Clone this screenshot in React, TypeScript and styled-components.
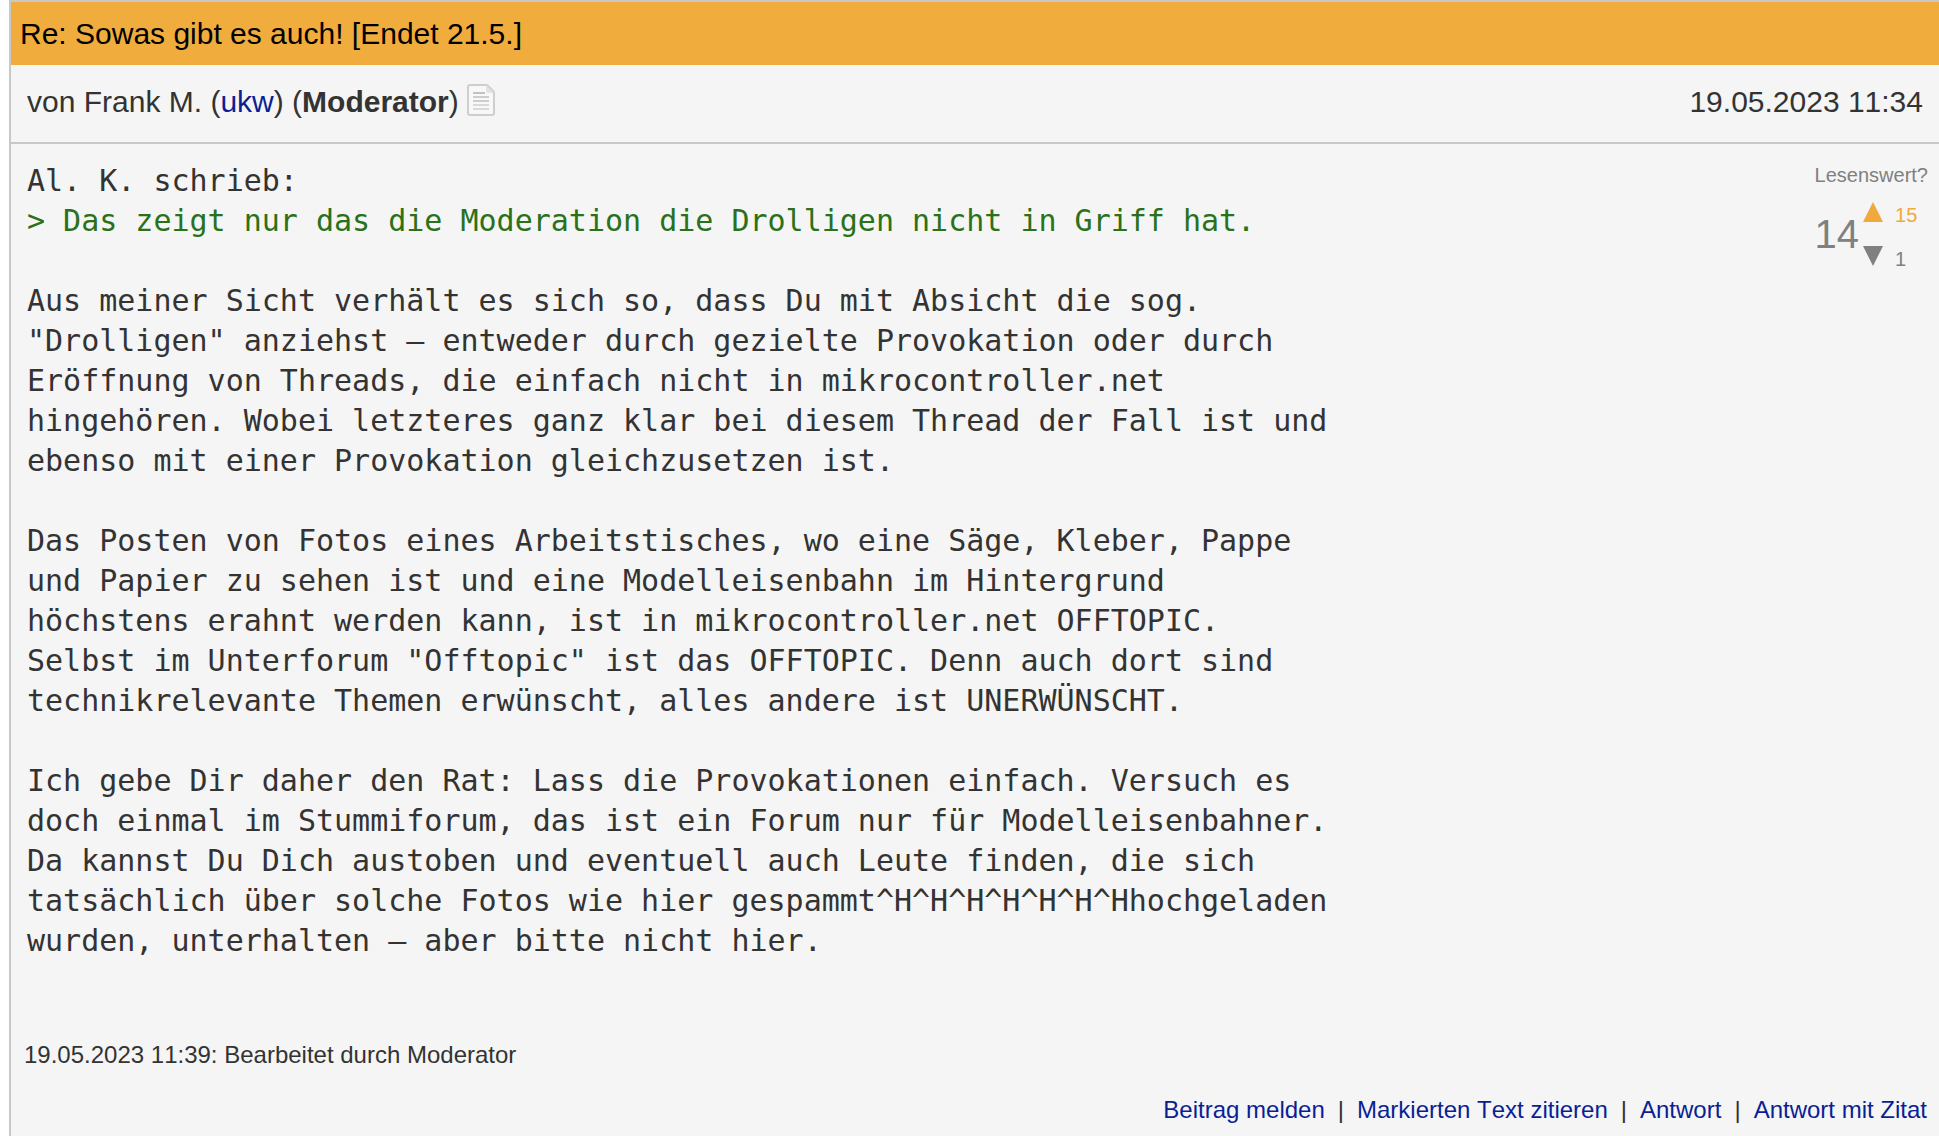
import React from "react";
import styled, { createGlobalStyle } from "styled-components";

const GlobalStyle = createGlobalStyle`
  body {
    margin: 0;
    background: #ffffff;
    font-family: "Liberation Sans", Arial, Helvetica, sans-serif;
    font-kerning: none;
    color: #333333;
  }
`;

const Post = styled.article`
  margin-left: 9px;
  border-top: 2px solid #c8c8c8;
  border-left: 2px solid #c8c8c8;
  background: #f5f5f5;
`;

const Title = styled.h1`
  margin: 0;
  padding: 12px 9px 11px;
  background: #f0ad3e;
  color: #000000;
  font-size: 30px;
  font-weight: 400;
  line-height: 40px;
`;

const Meta = styled.header`
  display: flex;
  justify-content: space-between;
  padding: 17px 16px 20px;
  border-bottom: 2px solid #c8c8c8;
  font-size: 30px;
  line-height: 40px;
`;

const Author = styled.div`
  display: flex;
  align-items: center;
  gap: 8px;
`;

const Link = styled.a`
  color: #0a1f96;
  text-decoration: none;
`;

const IconLink = styled.a`
  display: flex;
  padding-bottom: 4px;
`;

const Content = styled.div`
  display: flex;
  justify-content: space-between;
  align-items: flex-start;
  padding: 17px 11px 0 16px;
`;

const Message = styled.div`
  font-family: "DejaVu Sans Mono", Menlo, monospace;
  font-size: 30px;
  line-height: 40px;
  white-space: pre-wrap;
`;

const Quote = styled.span`
  color: #2a7119;
`;

const Rating = styled.aside`
  color: #808080;
  font-size: 20px;
  line-height: 24px;
  padding-top: 2px;
`;

const RatingRow = styled.div`
  display: flex;
  align-items: center;
  gap: 4px;
  margin-top: 14px;
`;

const Score = styled.span`
  padding-bottom: 6px;
  font-size: 40px;
  line-height: 44px;
`;

const Votes = styled.div`
  display: flex;
  flex-direction: column;
  gap: 16px;
`;

const VoteButton = styled.button<{ $color: string }>`
  display: flex;
  align-items: baseline;
  gap: 12px;
  padding: 0;
  border: 0;
  background: none;
  color: ${(p) => p.$color};
  font-family: inherit;
  font-size: 20px;
  line-height: 28px;
  cursor: pointer;
`;

const EditNote = styled.p`
  margin: 0;
  padding: 78px 13px 0;
  font-size: 24px;
  line-height: 32px;
`;

const Actions = styled.nav`
  display: flex;
  justify-content: flex-end;
  padding: 23px 12px 10px;
  font-size: 24px;
  line-height: 32px;
`;

const Separator = styled.span`
  padding: 0 13px;
`;

const PageIcon = () => (
  <svg width="28" height="32" viewBox="0 0 28 32" fill="none" aria-hidden="true">
    <path
      d="M3 1h16q1 0 2 1l5 5q1 1 1 2v20q0 2-2 2H3q-2 0-2-2V3q0-2 2-2z"
      fill="#f8f8f8"
      stroke="#cecece"
      strokeWidth="2"
    />
    <path d="M19 1v6q0 2 2 2h6z" fill="#e2e2e2" />
    <path d="M6 9h12" stroke="#c2c2c2" strokeWidth="2" />
    <path d="M6 13h16M6 17h16" stroke="#cdcdcd" strokeWidth="2" />
    <path d="M6 21h16M6 25h16" stroke="#d9d9d9" strokeWidth="2" />
  </svg>
);

const quoted = "> Das zeigt nur das die Moderation die Drolligen nicht in Griff hat.";

const text = `

Aus meiner Sicht verhält es sich so, dass Du mit Absicht die sog.
"Drolligen" anziehst – entweder durch gezielte Provokation oder durch
Eröffnung von Threads, die einfach nicht in mikrocontroller.net
hingehören. Wobei letzteres ganz klar bei diesem Thread der Fall ist und
ebenso mit einer Provokation gleichzusetzen ist.

Das Posten von Fotos eines Arbeitstisches, wo eine Säge, Kleber, Pappe
und Papier zu sehen ist und eine Modelleisenbahn im Hintergrund
höchstens erahnt werden kann, ist in mikrocontroller.net OFFTOPIC.
Selbst im Unterforum "Offtopic" ist das OFFTOPIC. Denn auch dort sind
technikrelevante Themen erwünscht, alles andere ist UNERWÜNSCHT.

Ich gebe Dir daher den Rat: Lass die Provokationen einfach. Versuch es
doch einmal im Stummiforum, das ist ein Forum nur für Modelleisenbahner.
Da kannst Du Dich austoben und eventuell auch Leute finden, die sich
tatsächlich über solche Fotos wie hier gespammt^H^H^H^H^H^H^Hhochgeladen
wurden, unterhalten – aber bitte nicht hier.`;

const actions = ["Beitrag melden", "Markierten Text zitieren", "Antwort", "Antwort mit Zitat"];

export default function App() {
  return (
    <>
      <GlobalStyle />
      <Post>
        <Title>Re: Sowas gibt es auch! [Endet 21.5.]</Title>
        <Meta>
          <Author>
            <span>
              von Frank M. (<Link href="#ukw">ukw</Link>) (<strong>Moderator</strong>)
            </span>
            <IconLink href="#post" aria-label="Beitrag">
              <PageIcon />
            </IconLink>
          </Author>
          <time dateTime="2023-05-19T11:34">19.05.2023 11:34</time>
        </Meta>
        <Content>
          <Message>
            {"Al. K. schrieb:\n"}
            <Quote>{quoted}</Quote>
            {text}
          </Message>
          <Rating>
            <div>Lesenswert?</div>
            <RatingRow>
              <Score>14</Score>
              <Votes>
                <VoteButton type="button" $color="#f0a93c">
                  <svg width="20" height="20" viewBox="0 0 20 20" aria-hidden="true">
                    <path d="M10 0l10 20H0z" fill="currentColor" />
                  </svg>
                  15
                </VoteButton>
                <VoteButton type="button" $color="#808080">
                  <svg width="20" height="20" viewBox="0 0 20 20" aria-hidden="true">
                    <path d="M0 0h20L10 20z" fill="currentColor" />
                  </svg>
                  1
                </VoteButton>
              </Votes>
            </RatingRow>
          </Rating>
        </Content>
        <EditNote>19.05.2023 11:39: Bearbeitet durch Moderator</EditNote>
        <Actions>
          {actions.map((label, i) => (
            <React.Fragment key={label}>
              {i > 0 && <Separator>|</Separator>}
              <Link href="#aktion">{label}</Link>
            </React.Fragment>
          ))}
        </Actions>
      </Post>
    </>
  );
}
